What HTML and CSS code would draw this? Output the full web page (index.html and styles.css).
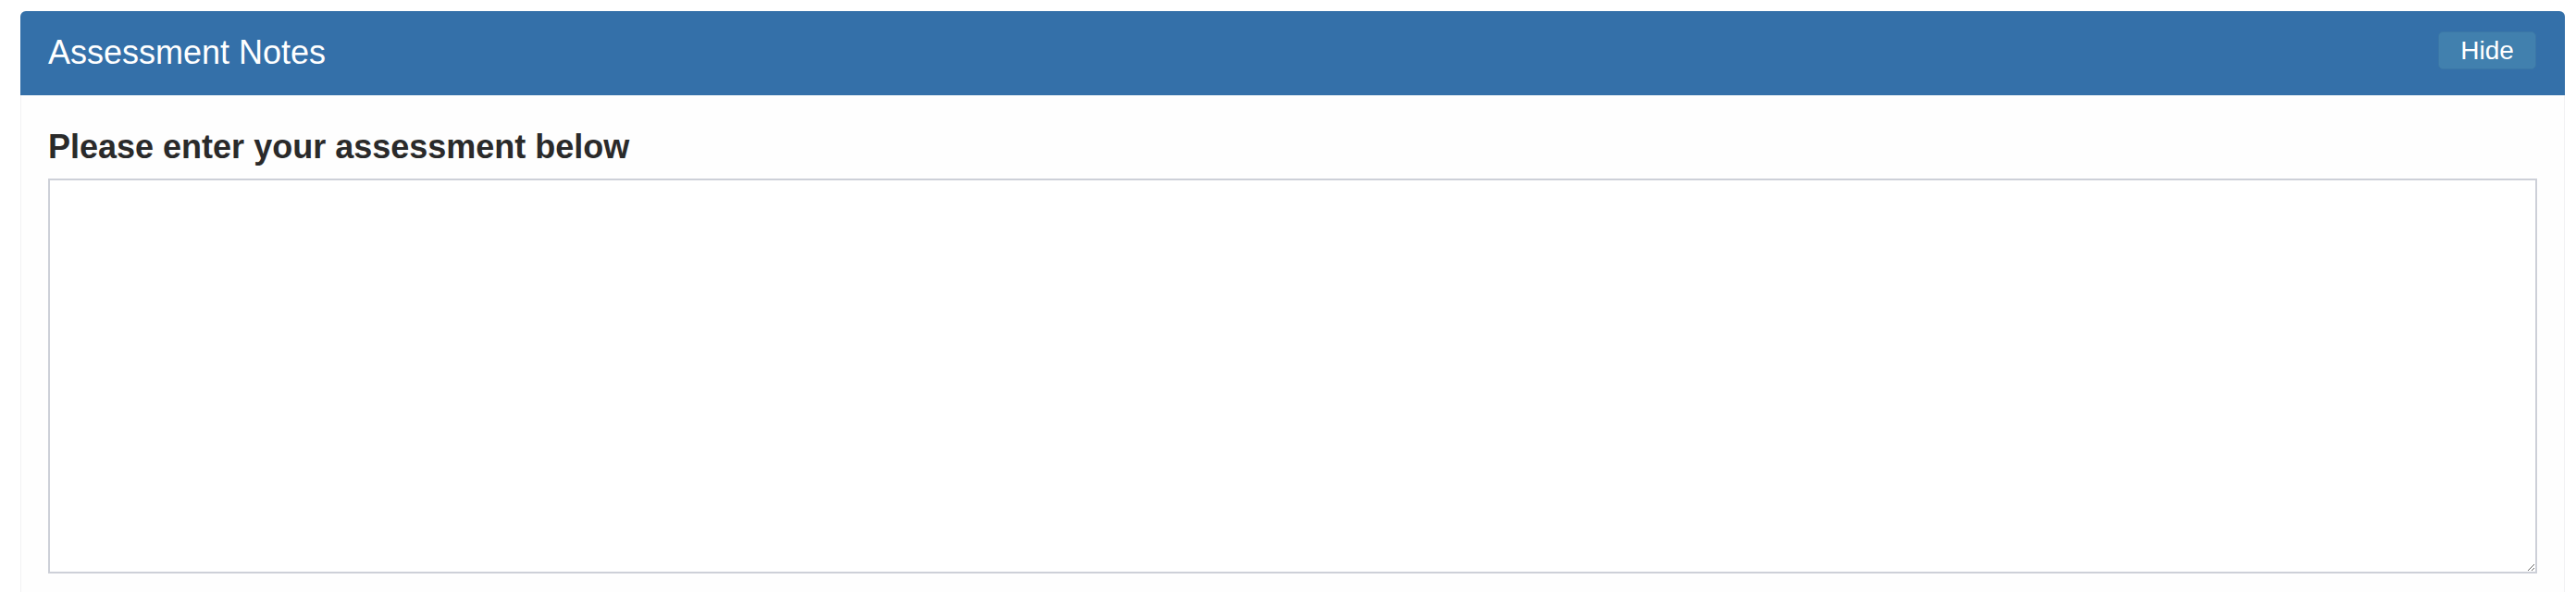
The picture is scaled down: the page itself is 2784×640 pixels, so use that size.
FILE: index.html
```html
<!DOCTYPE html>
<html lang="en">
<head>
<meta charset="utf-8">
<title>Assessment Notes</title>
<link rel="stylesheet" href="styles.css">
</head>
<body>
<div class="page">
  <section class="panel">
    <header class="panel-heading">
      <h3 class="panel-title">Assessment Notes</h3>
      <button class="btn-hide" type="button">Hide</button>
    </header>
    <div class="panel-body">
      <label class="field-label" for="notes">Please enter your assessment below</label>
      <textarea id="notes" class="notes"></textarea>
    </div>
  </section>
</div>
</body>
</html>
```

FILE: styles.css
```css
html, body {
  margin: 0;
  padding: 0;
  background: #ffffff;
  font-family: "Liberation Sans", Arial, Helvetica, sans-serif;
  color: #2b2b2b;
}

.page {
  padding: 12px 12px 0 22px;
}

.panel {
  border: 1px solid #f1f1f3;
  border-bottom: none;
  border-radius: 6px 6px 0 0;
  background: #fefefe;
  height: 628px;
  box-sizing: border-box;
}

.panel-heading {
  display: flex;
  align-items: center;
  justify-content: space-between;
  height: 91px;
  box-sizing: border-box;
  margin: -1px -1px 0 -1px;
  padding: 0 31px 0 30px;
  background: #3470a9;
  border-radius: 6px 6px 0 0;
  color: #ffffff;
}

.panel-title {
  margin: 0;
  font-size: 36px;
  font-weight: normal;
  line-height: 1.1;
  padding-bottom: 2px;
}

.btn-hide {
  width: 106px;
  height: 41px;
  margin-bottom: 6px;
  padding: 0;
  background: #4180ae;
  border: 1px solid #3b77a7;
  border-radius: 5px;
  color: #ffffff;
  font-family: "Liberation Sans", Arial, Helvetica, sans-serif;
  font-size: 28px;
  line-height: 1;
}

.panel-body {
  display: flex;
  flex-direction: column;
  padding: 36px 29px 0 29px;
}

.field-label {
  display: block;
  font-size: 36px;
  font-weight: bold;
  line-height: 1.1;
  margin-bottom: 14px;
  color: #2a2a2a;
}

.notes {
  display: block;
  width: 100%;
  height: 427px;
  box-sizing: border-box;
  border: 2px solid #cdd0d8;
  border-radius: 0;
  background: #ffffff;
  resize: both;
  margin: 0;
}
```
